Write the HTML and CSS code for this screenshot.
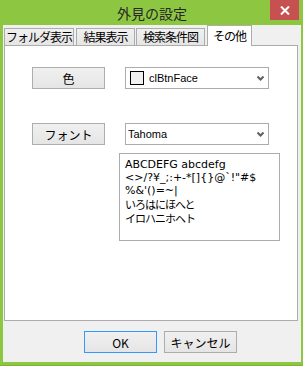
FILE: index.html
```html
<!DOCTYPE html>
<html>
<head>
    <title>外見の設定</title>
    <link rel="stylesheet" href="styles.css">
</head>
<body>
    <div class="window">
        <div class="titlebar">
            <span class="title">外見の設定</span>
            <button class="close-btn" aria-label="閉じる">
                <svg width="10" height="9" viewBox="0 0 10 9">
                    <path d="M1 0.5 L9 8.5 M9 0.5 L1 8.5" stroke="#ffffff" stroke-width="2" fill="none"/>
                </svg>
            </button>
        </div>

        <div class="client">
            <div class="tabs">
                <div class="tab tab-folder">フォルダ表示</div>
                <div class="tab tab-result">結果表示</div>
                <div class="tab tab-search">検索条件図</div>
                <div class="tab tab-other active">その他</div>
            </div>

            <div class="panel">
                <div class="row">
                    <button class="btn">色</button>
                    <div class="combo">
                        <span class="swatch"></span>
                        <span class="combo-text">clBtnFace</span>
                        <svg class="arrow" width="7" height="5" viewBox="0 0 7 5">
                            <path d="M0.5 0.5 L3.5 3.5 L6.5 0.5" stroke="#606060" stroke-width="2" fill="none"/>
                        </svg>
                    </div>
                </div>

                <div class="row">
                    <button class="btn">フォント</button>
                    <div class="combo">
                        <span class="combo-text plain">Tahoma</span>
                        <svg class="arrow" width="7" height="5" viewBox="0 0 7 5">
                            <path d="M0.5 0.5 L3.5 3.5 L6.5 0.5" stroke="#606060" stroke-width="2" fill="none"/>
                        </svg>
                    </div>
                </div>

                <div class="preview">
                    <div>ABCDEFG abcdefg</div>
                    <div>&lt;&gt;/?¥_;:+-*[]{}@`!"#$</div>
                    <div>%&amp;'()=~|</div>
                    <div class="jp">いろはにほへと</div>
                    <div class="jp">イロハニホヘト</div>
                </div>
            </div>

            <div class="actions">
                <button class="btn ok-btn">OK</button>
                <button class="btn">キャンセル</button>
            </div>
        </div>
    </div>
</body>
</html>
```

FILE: styles.css
```css
* {
    box-sizing: border-box;
}

body {
    margin: 0;
    font-family: "Noto Sans CJK JP", "Noto Sans", sans-serif;
    color: #000000;
}

.window {
    width: 303px;
    height: 366px;
    display: flex;
    flex-direction: column;
    padding: 0 2px 3px 3px;
    background-color: #8dc641;
    border-bottom: 1px solid #7db236;
}

.titlebar {
    position: relative;
    height: 25px;
    text-align: center;
}

.title {
    font-size: 14px;
    line-height: 25px;
    color: #262626;
}

.close-btn {
    position: absolute;
    top: 0;
    right: 2px;
    width: 29px;
    height: 20px;
    border: none;
    padding: 0;
    background-color: #c75050;
    display: flex;
    align-items: center;
    justify-content: center;
}

.client {
    flex: 1;
    background-color: #f0f0f0;
}

/* tabs */
.tabs {
    display: flex;
    height: 21px;
}

.tab {
    align-self: flex-end;
    height: 18px;
    margin-left: 1px;
    border: 1px solid #acacac;
    background: linear-gradient(#f0f0f0, #e5e5e5);
    font-size: 12px;
    line-height: 15px;
    text-align: center;
    white-space: nowrap;
    letter-spacing: -1px;
}

.tab-folder {
    width: 70px;
}

.tab-result {
    width: 59px;
    margin-left: 2px;
}

.tab-search {
    width: 69px;
}

.tab.active {
    position: relative;
    width: 45px;
    height: 21px;
    margin-left: 2px;
    border-bottom: none;
    background: #ffffff;
    line-height: 19px;
}

.panel {
    height: 276px;
    margin: -1px 3px 0 1px;
    padding: 21px 0 0 27px;
    border: 1px solid #acacac;
    background-color: #ffffff;
}

.row {
    display: flex;
    align-items: center;
    height: 22px;
}

.row + .row {
    margin-top: 34px;
}

.btn {
    width: 73px;
    height: 22px;
    padding: 0;
    border: 1px solid #adadad;
    background: linear-gradient(#f0f0f0, #e5e5e5);
    font-family: "Noto Sans CJK JP", sans-serif;
    font-size: 12px;
    color: #000000;
}

.combo {
    display: flex;
    align-items: center;
    width: 144px;
    height: 22px;
    margin-left: 20px;
    padding: 0 4px 0 3px;
    border: 1px solid #acacac;
    background-color: #ffffff;
}

.swatch {
    width: 14px;
    height: 14px;
    margin-left: 1px;
    margin-right: 5px;
    border: 1px solid #000000;
    background-color: #f0f0f0;
}

.combo-text {
    font-family: "Liberation Sans", Arial, sans-serif;
    font-size: 11px;
}

.combo-text.plain {
    margin-left: -1px;
}

.arrow {
    margin-left: auto;
    margin-right: 0;
}

/* font sample */
.preview {
    width: 161px;
    height: 88px;
    margin: 8px 0 0 87px;
    padding: 4px 0 0 5px;
    border: 1px solid #acacac;
    font-family: "DejaVu Sans", Verdana, sans-serif;
    font-size: 11px;
    line-height: 13px;
    white-space: nowrap;
}

.preview .jp {
    font-family: "Noto Sans CJK JP", sans-serif;
    font-size: 11px;
    line-height: 14px;
    letter-spacing: -1px;
}

.actions {
    display: flex;
    gap: 7px;
    margin-top: 10px;
    padding-left: 81px;
}

.ok-btn {
    border-color: #3399ff;
}
```
